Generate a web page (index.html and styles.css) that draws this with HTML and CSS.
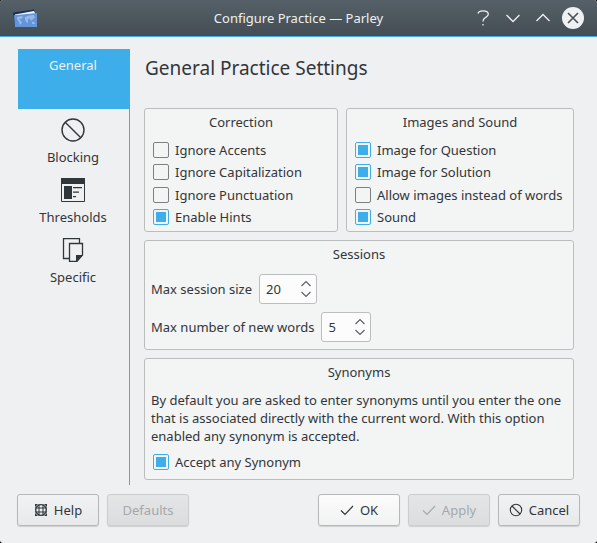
FILE: index.html
```html
<!DOCTYPE html>
<html lang="en">
<head>
<meta charset="utf-8">
<title>Configure Practice — Parley</title>
<link rel="stylesheet" href="styles.css">
</head>
<body>
<div class="window">
  <header class="titlebar">
    <svg class="app-icon" width="24" height="18" viewBox="0 0 24 18" aria-hidden="true">
      <path d="M0 3.500 L21 0.500 L22 4 L2 18 Z" fill="#17325c"/>
      <path d="M2 5.500 L21 2 L22.500 5 L2 8 Z" fill="#f4f6f8"/>
      <path d="M1 6.300 L24 4 L24 18 L2 18 Z" fill="#6495d8"/>
      <path d="M4 8 L9 7 L10 8.500 L8 10 L6 10 L8 12 L9 13.500 L7 16 L6 13 L4 10 Z M12 8 L16 6.500 L21 6 L22 8.500 L20 10 L18 12 L17 9.500 L15 10 L15 14 L13 13 L12 10 Z M19 13 L21 12.500 L22 15 L19 15 Z" fill="#98b9e8"/>
    </svg>
    <h1 class="title">Configure Practice — Parley</h1>
    <div class="window-controls">
      <button type="button" aria-label="Context help"><svg width="22" height="22" viewBox="0 0 22 22"><path d="M6 6.500 C6.500 4.500 8.500 3.800 11 3.800 C14.500 3.800 16.300 5.200 16.300 7.300 C16.300 9.300 14.500 10 13 10.800 C11.500 11.500 11 12.300 11 14.500 M11 17 V18.500"/></svg></button>
      <button type="button" aria-label="Minimize"><svg width="22" height="22" viewBox="0 0 22 22"><path d="M4.500 8 L11 14.500 L17.500 8"/></svg></button>
      <button type="button" aria-label="Maximize"><svg width="22" height="22" viewBox="0 0 22 22"><path d="M4.500 14 L11 7.500 L17.500 14"/></svg></button>
      <button type="button" class="close" aria-label="Close"><svg width="22" height="22" viewBox="0 0 22 22"><path d="M6 6 L16 16 M16 6 L6 16"/></svg></button>
    </div>
  </header>

  <div class="content">
    <nav class="sidebar">
      <a class="page current" href="#general" aria-current="page">General</a>
      <a class="page" href="#blocking">
        <svg width="24" height="24" viewBox="0 0 24 24"><g fill="none" stroke="#31363b" stroke-width="1.400"><circle cx="12" cy="12" r="11"/><path d="M4.200 4.200 L19.800 19.800"/></g></svg>
        Blocking</a>
      <a class="page" href="#thresholds">
        <svg width="24" height="24" viewBox="0 0 24 24"><path d="M0.500 0.500 H23.500 V23.500 H0.500 Z" fill="none" stroke="#31363b"/><path d="M0 0 H24 V6 H0 Z M3 8 H11 V21 H3 Z M12 9 H21 V10.200 H12 Z M12 13.500 H18 V14.700 H12 Z M12 18 H15 V19.200 H12 Z" fill="#31363b"/></svg>
        Thresholds</a>
      <a class="page" href="#specific">
        <svg width="24" height="24" viewBox="0 0 24 24"><path d="M8 20.500 H2.500 V0.500 H18.500 V5 M8.500 5.500 H21.500 V17 L16 23.300 H8.500 Z" fill="none" stroke="#31363b" stroke-width="1.300"/><path d="M15 24 V17 H22 Z" fill="#31363b"/></svg>
        Specific</a>
    </nav>

    <main class="settings">
      <h2 class="heading">General Practice Settings</h2>

      <div class="group-row">
        <fieldset class="group">
          <legend>Correction</legend>
          <div class="checks">
            <label><input type="checkbox">Ignore Accents</label>
            <label><input type="checkbox">Ignore Capitalization</label>
            <label><input type="checkbox">Ignore Punctuation</label>
            <label><input type="checkbox" checked>Enable Hints</label>
          </div>
        </fieldset>
        <fieldset class="group">
          <legend>Images and Sound</legend>
          <div class="checks">
            <label><input type="checkbox" checked>Image for Question</label>
            <label><input type="checkbox" checked>Image for Solution</label>
            <label><input type="checkbox">Allow images instead of words</label>
            <label><input type="checkbox" checked>Sound</label>
          </div>
        </fieldset>
      </div>

      <fieldset class="group">
        <legend>Sessions</legend>
        <div class="fields">
          <div class="field">
            <label for="session-size">Max session size</label>
            <span class="spin wide">
              <input id="session-size" type="text" inputmode="numeric" value="20">
              <svg width="12" height="18" viewBox="0 0 12 18" aria-hidden="true"><path d="M1.500 6 L6 1.500 L10.500 6 M1.500 12 L6 16.500 L10.500 12"/></svg>
            </span>
          </div>
          <div class="field">
            <label for="new-words">Max number of new words</label>
            <span class="spin">
              <input id="new-words" type="text" inputmode="numeric" value="5">
              <svg width="12" height="18" viewBox="0 0 12 18" aria-hidden="true"><path d="M1.500 6 L6 1.500 L10.500 6 M1.500 12 L6 16.500 L10.500 12"/></svg>
            </span>
          </div>
        </div>
      </fieldset>

      <fieldset class="group">
        <legend>Synonyms</legend>
        <p class="note">By default you are asked to enter synonyms until you enter the one that is associated directly with the current word. With this option enabled any synonym is accepted.</p>
        <div class="checks single">
          <label><input type="checkbox" checked>Accept any Synonym</label>
        </div>
      </fieldset>
    </main>
  </div>

  <footer class="actions">
    <button type="button" class="button"><svg width="14" height="14" viewBox="0 0 14 14"><g fill="none" stroke="#31363b"><circle cx="7" cy="7" r="5.300" stroke-width="1.300"/><path d="M5 1 V13 M9 1 V13 M1 5 H13 M1 9 H13"/></g><path d="M1 1 H4 L1 4 Z M10 1 H13 V4 Z M1 10 L4 13 H1 Z M13 10 V13 H10 Z" fill="#31363b"/></svg>Help</button>
    <button type="button" class="button" disabled>Defaults</button>
    <span class="spacer"></span>
    <button type="button" class="button primary"><svg width="14" height="14" viewBox="0 0 14 14"><path d="M1 7.500 L5 11.500 L13 3" fill="none" stroke="#31363b" stroke-width="1.200"/></svg>OK</button>
    <button type="button" class="button" disabled><svg width="14" height="14" viewBox="0 0 14 14"><path d="M1 7.500 L5 11.500 L13 3" fill="none" stroke="#a5a8ab" stroke-width="1.200"/></svg>Apply</button>
    <button type="button" class="button"><svg width="14" height="14" viewBox="0 0 14 14"><g fill="none" stroke="#31363b" stroke-width="1.100"><circle cx="7" cy="7" r="5.700"/><path d="M3 3 L11 11"/></g></svg>Cancel</button>
  </footer>
</div>
</body>
</html>
```
FILE: styles.css
```css
* {
  box-sizing: border-box;
}

body {
  margin: 0;
  background: #000;
  color: #31363b;
  font: 13px/18px "Noto Sans", sans-serif;
}

.window {
  display: flex;
  flex-direction: column;
  min-height: 100vh;
  border-radius: 3px;
  background: #eff0f1;
  overflow: hidden;
}

.titlebar {
  display: grid;
  grid-template-columns: 120px 1fr 120px;
  align-items: center;
  height: 37px;
  padding: 0 13px;
  border-bottom: 1px solid #3daee9;
  background: linear-gradient(#566068, #444d53);
}

.title {
  margin: 0;
  color: #eff0f1;
  font-size: 13px;
  font-weight: 400;
  text-align: center;
}

.window-controls {
  display: flex;
  justify-content: flex-end;
  gap: 8px;
}

.window-controls button {
  width: 22px;
  height: 22px;
  padding: 0;
  border: 0;
  border-radius: 50%;
  background: none;
}

.window-controls svg {
  display: block;
  fill: none;
  stroke: #eff0f1;
  stroke-width: 1.3;
}

.window-controls .close {
  background: #eff0f1;
}

.window-controls .close svg {
  stroke: #475057;
  stroke-width: 1.6;
}

.content {
  display: flex;
  flex: 1;
  gap: 14px;
  padding: 12px 23px 0 18px;
}

.sidebar {
  width: 112px;
  border-right: 1px solid #3daee9;
}

.page {
  display: flex;
  flex-direction: column;
  align-items: center;
  gap: 6px;
  height: 60px;
  margin-right: -1px;
  padding: 9px 2px 0 0;
  color: inherit;
  text-decoration: none;
}

.page.current {
  padding-top: 7px;
  background: #3daee9;
  color: #eff0f1;
}

.settings {
  display: flex;
  flex: 1;
  flex-direction: column;
  gap: 8px;
  padding-bottom: 5px;
}

.heading {
  margin: 0 1px;
  padding: 5px 0 18px;
  font-size: 19px;
  font-weight: 400;
  line-height: 28px;
}

.group-row {
  display: grid;
  grid-template-columns: 194fr 228fr;
  gap: 8px;
}

.group {
  min-width: 0;
  margin: 0;
  padding: 4px 6px 0;
  border: 1px solid #bbbdbf;
  border-radius: 3px;
  background: #f3f4f4;
}

.group legend {
  float: left;
  width: 100%;
  padding: 0;
  text-align: center;
}

.checks {
  display: grid;
  grid-auto-rows: 1fr;
  clear: both;
  height: 100px;
  padding: 8px 2px 3px;
}

.checks.single {
  height: 34px;
  padding: 5px 2px;
}

.checks label {
  display: flex;
  align-items: center;
  gap: 6px;
}

.checks input {
  appearance: none;
  width: 16px;
  height: 16px;
  margin: 0;
  border: 1px solid #7c8083;
  border-radius: 2px;
}

.checks input:checked {
  border-color: #3daee9;
  background: #3daee9 content-box;
  padding: 2px;
}

.fields {
  display: flex;
  flex-direction: column;
  clear: both;
  gap: 8px;
  padding: 11px 0 7px;
}

.field {
  display: flex;
  align-items: center;
  gap: 7px;
}

.spin {
  display: flex;
  align-items: center;
  width: 50px;
  height: 30px;
  padding: 0 4px 0 6px;
  border: 1px solid #bbbdbf;
  border-radius: 3px;
  background: #fcfcfc;
}

.spin.wide {
  width: 58px;
}

.spin input {
  flex: 1;
  min-width: 0;
  padding: 0;
  border: 0;
  background: none;
  color: inherit;
  font: inherit;
}

.spin svg {
  fill: none;
  stroke: #5c6165;
  stroke-width: 1.2;
}

.note {
  clear: both;
  margin: 0;
  padding-top: 10px;
}

.actions {
  display: flex;
  gap: 8px;
  padding: 9px 17px 17px;
}

.spacer {
  flex: 1;
}

.button {
  display: flex;
  align-items: center;
  justify-content: center;
  gap: 6px;
  width: 82px;
  height: 32px;
  padding: 0;
  border: 1px solid #b5b7b9;
  border-radius: 3px;
  background: linear-gradient(#f1f2f3, #e8e9ea);
  box-shadow: 0 1px 1px #cfd0d2;
  color: inherit;
  font: inherit;
}

.button.primary {
  background: linear-gradient(#fcfcfc, #f1f2f2);
}

.button:disabled {
  border-color: #cbcdce;
  background: linear-gradient(#e4e5e6, #dcddde);
  color: #a5a8ab;
}
```
